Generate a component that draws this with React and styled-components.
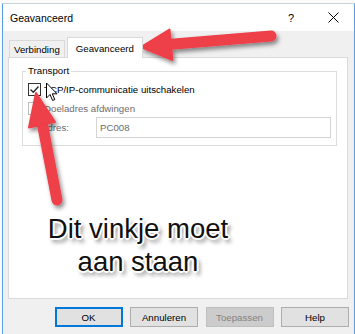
import React from 'react';
import styled, { createGlobalStyle } from 'styled-components';

const GlobalStyle = createGlobalStyle`
  html, body {
    margin: 0;
    padding: 0;
  }
  body {
    font-family: "Liberation Sans", Arial, sans-serif;
    background: #ffffff;
  }
`;

const Desktop = styled.div`
  position: relative;
  width: 355px;
  height: 334px;
  overflow: hidden;
  box-sizing: border-box;
  padding: 3px 0 0 2px;
  background: #fbfbfb;
`;

const Dialog = styled.div`
  width: 353px;
  height: 333px;
  box-sizing: border-box;
  border: 1px solid #5b9ee1;
  border-top-color: #c7d3df;
  display: flex;
  flex-direction: column;
  background: #f0f0f0;
`;

const TitleBar = styled.div`
  height: 27px;
  flex: none;
  display: flex;
  align-items: center;
  padding-left: 7px;
  background: #ffffff;
  font-size: 10.5px;
  color: #000;
`;

const TitleText = styled.span`
  flex: 1;
`;

const TitleButton = styled.div`
  width: ${(p) => p.$width}px;
  height: 27px;
  display: flex;
  align-items: center;
  justify-content: center;
  font-size: 11px;
  color: #000;
`;

const Body = styled.div`
  flex: 1;
  display: flex;
  flex-direction: column;
  padding: 6px 6px 0 5px;
`;

const TabStrip = styled.div`
  height: 20px;
  display: flex;
  align-items: flex-end;
  padding-left: 1px;
  position: relative;
  z-index: 1;
`;

const Tab = styled.div`
  box-sizing: border-box;
  height: ${(p) => (p.$active ? 21 : 17)}px;
  margin-bottom: ${(p) => (p.$active ? -1 : 0)}px;
  margin-left: ${(p) => (p.$active ? 2 : 0)}px;
  padding: 0 ${(p) => (p.$active ? 8 : 4)}px;
  border: 1px solid #d9d9d9;
  border-bottom: none;
  background: ${(p) => (p.$active ? '#ffffff' : '#f0f0f0')};
  display: flex;
  align-items: center;
  font-size: 9.7px;
  color: #000;
`;

const Panel = styled.div`
  height: 242px;
  box-sizing: border-box;
  background: #ffffff;
  border: 1px solid #d9d9d9;
  padding: 7px 10px 0 13px;
`;

const Group = styled.fieldset`
  margin: 0;
  padding: 0 5px 7px 5px;
  border: 1px solid #dcdcdc;
  display: flex;
  flex-direction: column;
`;

const Legend = styled.legend`
  padding: 0 2px;
  margin-left: -2px;
  font-size: 9.7px;
  line-height: 12px;
  color: #000;
`;

const Row = styled.div`
  display: flex;
  align-items: center;
  height: ${(p) => p.$height || 16}px;
  margin-top: ${(p) => p.$gap}px;
  font-size: 9.7px;
  color: ${(p) => (p.$disabled ? '#6d6d6d' : '#000')};
`;

const Box = styled.span`
  width: 13px;
  height: 13px;
  box-sizing: border-box;
  border: 1px solid ${(p) => (p.$disabled ? '#bcbcbc' : '#333333')};
  background: #ffffff;
  margin-right: 3px;
  display: flex;
  align-items: center;
  justify-content: center;
`;

const FieldLabel = styled.span`
  width: 55px;
  padding-left: 13px;
`;

const TextInput = styled.div`
  flex: 1;
  height: 21px;
  box-sizing: border-box;
  border: 1px solid #d4d4d4;
  background: #ffffff;
  padding-left: 3px;
  display: flex;
  align-items: center;
  color: #6d6d6d;
`;

const ButtonRow = styled.div`
  display: flex;
  justify-content: flex-end;
  gap: 7.5px;
  margin-top: 8px;
  margin-right: -1px;
`;

const Button = styled.div`
  width: 68px;
  height: 20px;
  box-sizing: border-box;
  display: flex;
  align-items: center;
  justify-content: center;
  font-size: 9.7px;
  background: ${(p) => (p.$disabled ? '#cccccc' : '#e1e1e1')};
  border: 1px solid ${(p) => (p.$primary ? '#0078d7' : p.$disabled ? '#bfbfbf' : '#adadad')};
  box-shadow: ${(p) => (p.$primary ? 'inset 0 0 0 1px #0078d7' : 'none')};
  color: ${(p) => (p.$disabled ? '#838383' : '#000')};
`;

const Overlay = styled.svg`
  position: absolute;
  left: 0;
  top: 0;
  pointer-events: none;
`;

const Annotation = styled.div`
  position: absolute;
  left: 38px;
  top: 212px;
  width: 200px;
  text-align: center;
  font-family: "Liberation Sans", Arial, sans-serif;
  font-size: 27.5px;
  line-height: 33px;
  color: #111111;
  text-shadow: 0 0 2px #fff, 1px 1px 0 #fff, -1px -1px 0 #fff, 1px -1px 0 #fff,
    -1px 1px 0 #fff, 2px 0 0 #fff, -2px 0 0 #fff, 0 2px 0 #fff, 0 -2px 0 #fff,
    3px 4px 4px rgba(0, 0, 0, 0.55);
`;

const RED = '#ee3f4a';

const Arrows = () => (
  <Overlay width="355" height="334" viewBox="0 0 355 334">
    <defs>
      <filter id="shadow" x="-20%" y="-20%" width="140%" height="140%">
        <feDropShadow dx="2" dy="3" stdDeviation="2" floodColor="#000" floodOpacity="0.45" />
      </filter>
    </defs>
    <g filter="url(#shadow)" fill={RED} stroke={RED} strokeLinejoin="round">
      <line x1="168" y1="44.5" x2="271" y2="36" strokeWidth="11" strokeLinecap="round" />
      <polygon points="141,47 169.5,29.5 172.5,60" strokeWidth="2" />
      <line x1="42" y1="122" x2="57" y2="200" strokeWidth="11" strokeLinecap="round" />
      <polygon points="36,93 55,122 29,127.5" strokeWidth="2" />
    </g>
    <path
      d="M46.5 83 L46.5 98 L50 94.5 L52.6 100.5 L54.8 99.6 L52.3 93.8 L57 93.8 Z"
      fill="#fff"
      stroke="#000"
      strokeWidth="1"
      strokeLinejoin="miter"
    />
  </Overlay>
);

const Check = () => (
  <svg width="11" height="11" viewBox="0 0 11 11">
    <polyline points="1.5,5.5 4.3,8.3 9.5,2.5" fill="none" stroke="#222" strokeWidth="1.3" />
  </svg>
);

const CloseIcon = () => (
  <svg width="11" height="11" viewBox="0 0 11 11">
    <path d="M0.5 0.5 L10.5 10.5 M10.5 0.5 L0.5 10.5" stroke="#000" strokeWidth="1" />
  </svg>
);

const App = () => {
  return (
    <>
      <GlobalStyle />
      <Desktop>
        <Dialog>
          <TitleBar>
            <TitleText>Geavanceerd</TitleText>
            <TitleButton $width={42}>?</TitleButton>
            <TitleButton $width={42}>
              <CloseIcon />
            </TitleButton>
          </TitleBar>
          <Body>
            <TabStrip>
              <Tab>Verbinding</Tab>
              <Tab $active>Geavanceerd</Tab>
            </TabStrip>
            <Panel>
              <Group>
                <Legend>Transport</Legend>
                <Row $gap={4}>
                  <Box>
                    <Check />
                  </Box>
                  TCP/IP-communicatie uitschakelen
                </Row>
                <Row $gap={3} $disabled>
                  <Box $disabled />
                  Doeladres afdwingen
                </Row>
                <Row $gap={1} $height={21} $disabled>
                  <FieldLabel>Adres:</FieldLabel>
                  <TextInput>PC008</TextInput>
                </Row>
              </Group>
            </Panel>
            <ButtonRow>
              <Button $primary>OK</Button>
              <Button>Annuleren</Button>
              <Button $disabled>Toepassen</Button>
              <Button>Help</Button>
            </ButtonRow>
          </Body>
        </Dialog>
        <Arrows />
        <Annotation>
          Dit vinkje moet
          <br />
          aan staan
        </Annotation>
      </Desktop>
    </>
  );
};

export default App;
